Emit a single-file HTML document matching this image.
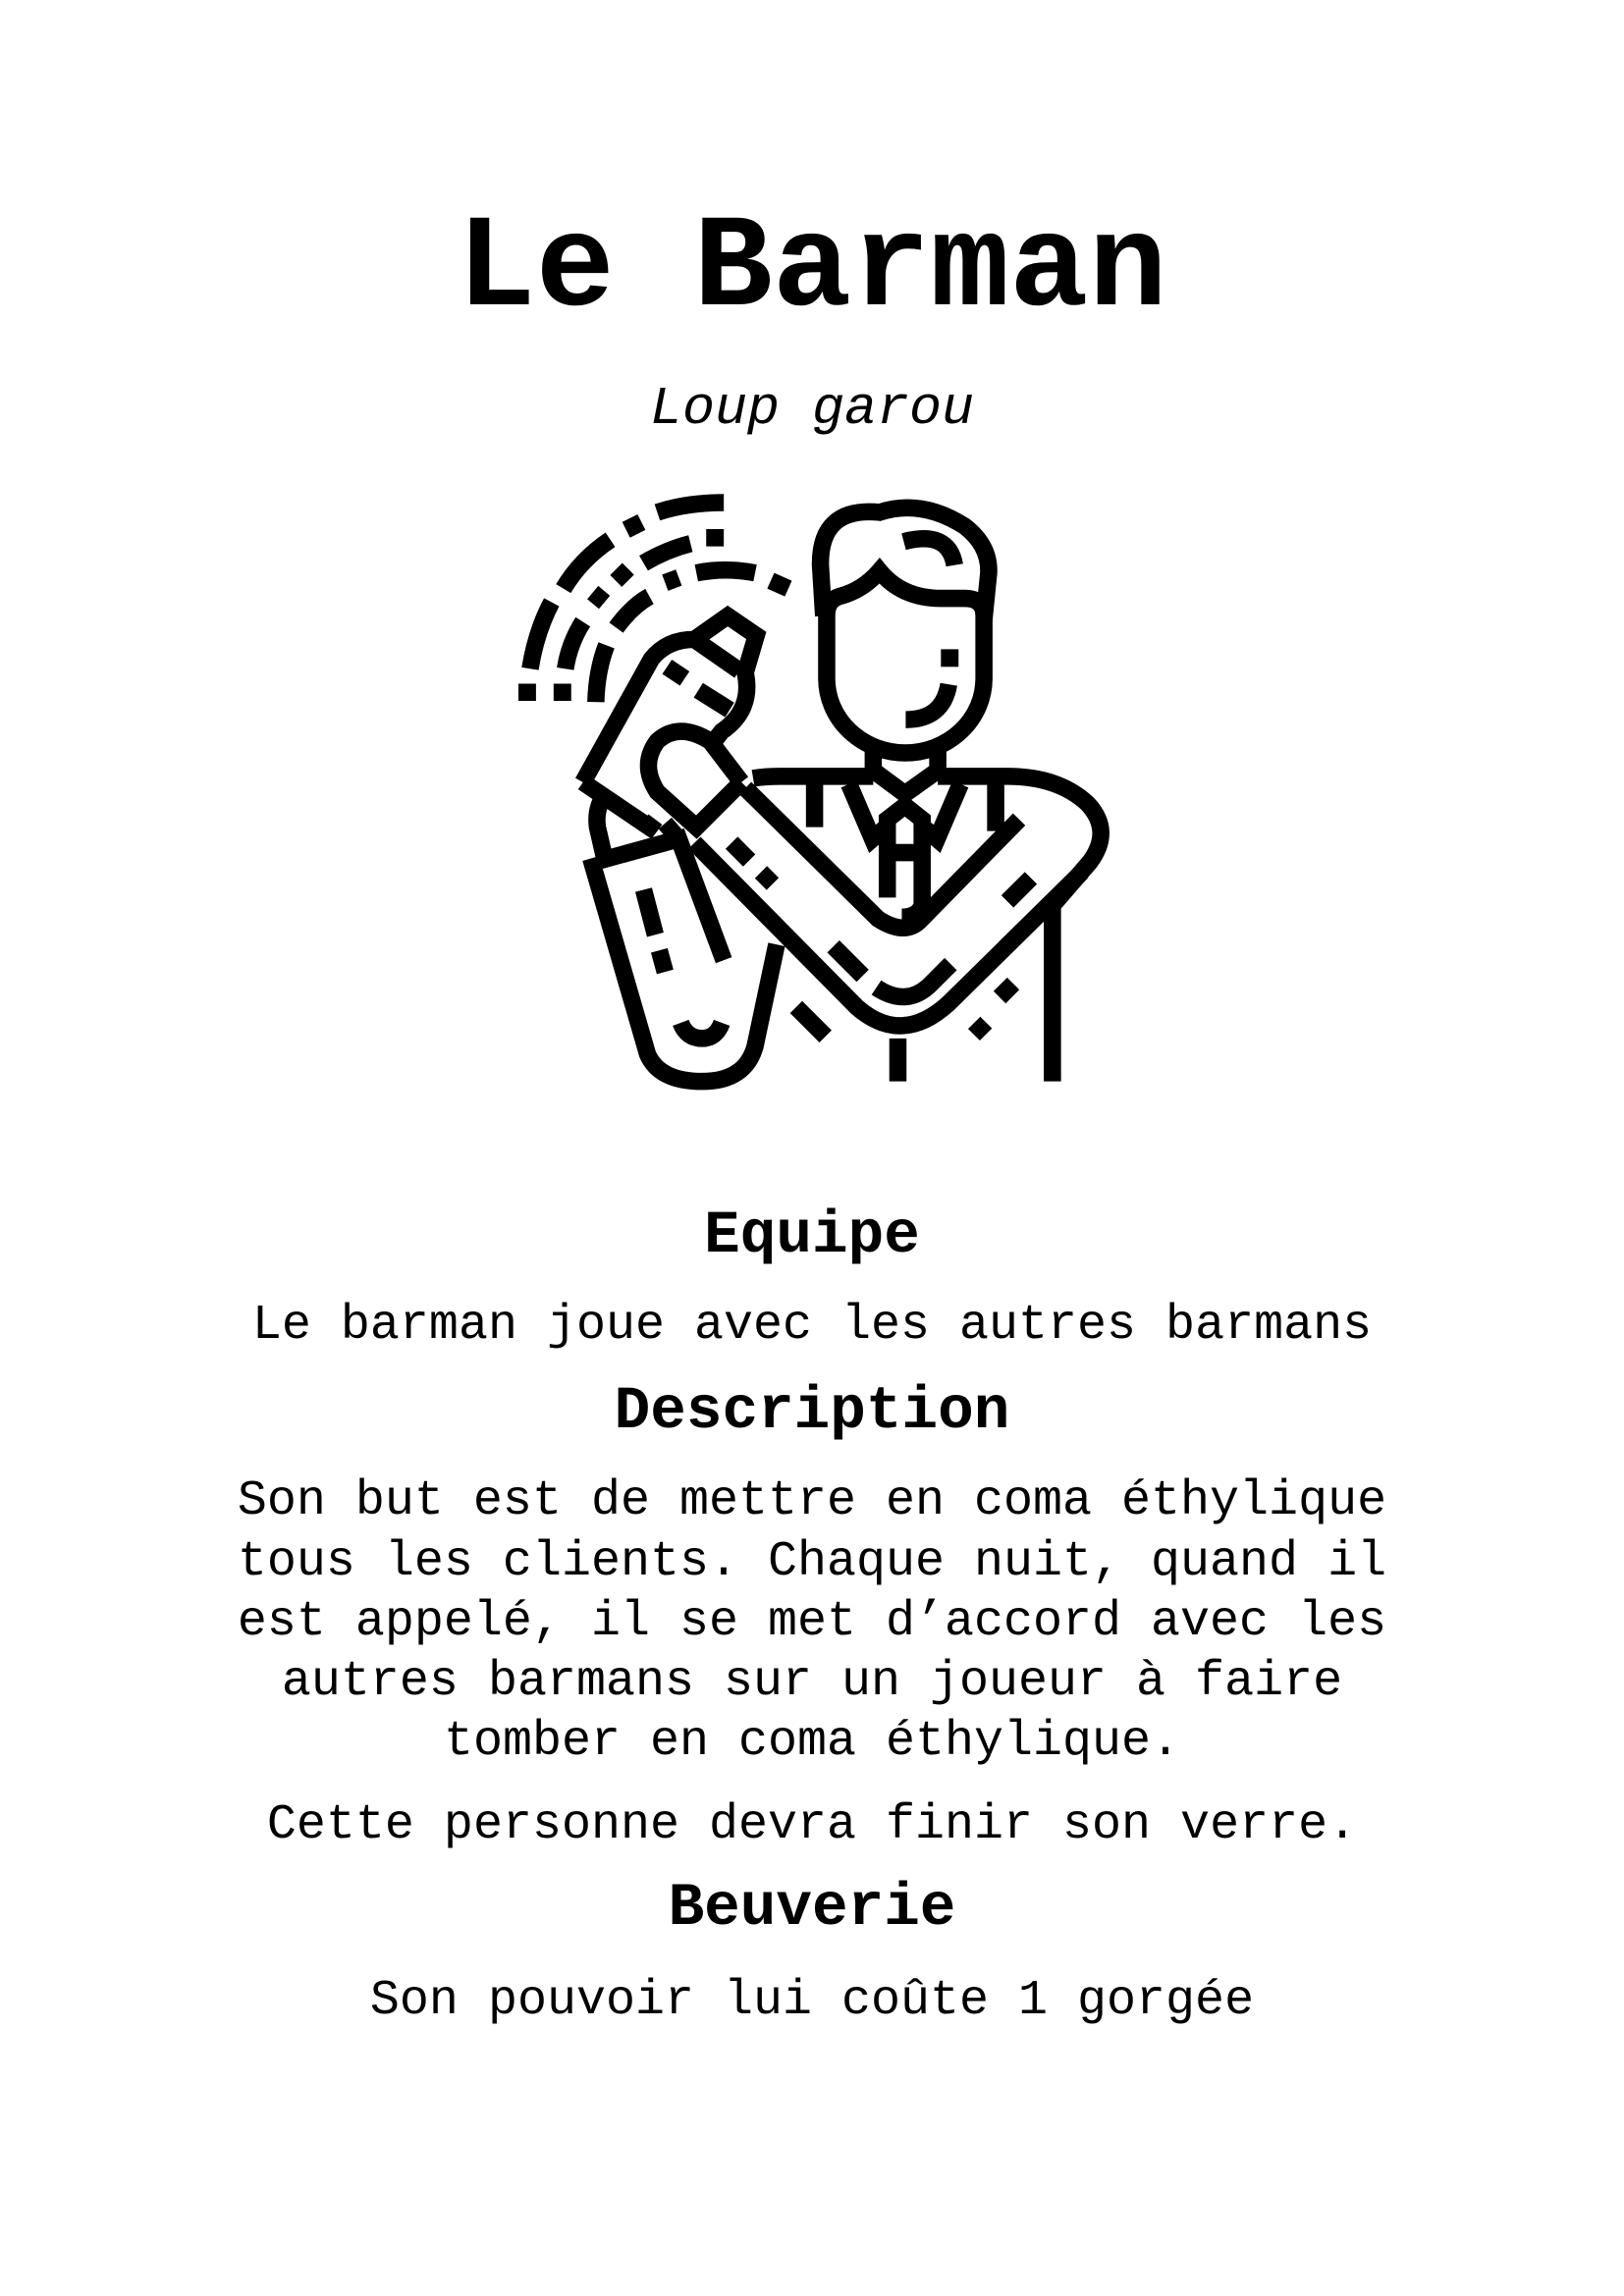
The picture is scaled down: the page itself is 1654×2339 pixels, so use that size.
<!DOCTYPE html>
<html><head><meta charset="utf-8"><style>
html,body{margin:0;padding:0;background:#fff;}
body{width:1654px;height:2339px;position:relative;overflow:hidden;font-family:"Liberation Mono",monospace;color:#000;}
.l{position:absolute;left:0;width:1654px;text-align:center;white-space:pre;}
.t{font-size:134px;line-height:134px;font-weight:bold;}
.s{font-size:55px;line-height:55px;font-style:italic;}
.h{font-size:61px;line-height:61px;font-weight:bold;}
.b{font-size:50px;line-height:50px;}
</style></head><body>
<div class="l t" style="top:208px">Le Barman</div>
<div class="l s" style="top:389px">Loup garou</div>
<svg style="position:absolute;left:520px;top:500px" width="620" height="620" viewBox="0 0 1556 1556" fill="none" stroke="#000" stroke-width="44" stroke-linejoin="miter">
<path d="M808,320 V480 A201,190 0 0 0 1210,480 V320 Q1210,275 1160,275 H1100 Q1000,275 943,205 Q900,255 840,270 Q808,280 808,320"/>
<path d="M800,320 L792,190 Q790,40 943,55 Q1050,20 1160,90 Q1225,140 1222,210 L1210,330"/>
<path d="M1005,130 Q1120,100 1135,190"/>
<rect x="1100" y="405" width="45" height="45" fill="#000" stroke="none"/>
<path d="M1010,585 Q1105,585 1120,495"/>
<path d="M927,650 V730 M1092,650 V730 M927,715 L1008,775 L1092,715"/>
<path d="M620,735 Q650,730 690,730 H927 M1092,730 H1270 Q1400,730 1475,800 Q1540,870 1480,950 L1385,1060 V1510"/>
<path d="M600,760 L940,1095 Q1010,1140 1050,1095 L1300,840"/>
<path d="M470,900 L885,1320 Q1000,1420 1120,1310 L1460,975"/>
<path d="M777,750 V860 M1240,750 V870 M865,750 L925,890 L960,860 M1150,750 L1090,890 L1055,860"/>
<path d="M963,1040 V840 L1008,805 L1052,840 V1060 Q1040,1090 1000,1090 M985,925 H1030"/>
<path d="M590,745 L475,860 L375,770 Q330,700 375,640 Q430,590 510,640 L590,745"/>
<path d="M185,745 L360,430 Q400,380 470,380 L555,320 L628,370 L600,465 Q620,560 540,615 L520,640 M185,745 L355,860 L370,840 M470,380 L585,460"/>
<path d="M400,450 L445,480 M480,510 L560,560"/>
<path d="M205,940 L350,1440 Q380,1510 490,1510 Q600,1510 625,1420 L680,1160 M230,945 L430,890 L545,1200 M245,960 L222,860 Q215,810 245,770 M395,850 L430,890"/>
<path d="M340,1020 L370,1135 M380,1175 L395,1230 M435,1360 Q450,1400 490,1400 Q525,1400 540,1360"/>
<path d="M565,900 L610,945 M640,975 L670,1005 M825,1165 L900,1240 M935,1270 Q1010,1320 1070,1265 L1125,1210 M730,1320 L805,1395 M1185,1360 L1215,1390 M1250,1295 L1285,1260 M1270,1050 L1330,990"/>
<path d="M990,1400 V1510"/>
<path d="M545,30 Q450,30 375,55 M305,70 L325,110 M255,125 Q180,175 135,250 M105,285 Q65,360 50,455 M20,515 H65 M110,515 H155 M340,185 Q400,150 460,135 M500,120 H545 M270,200 L300,230 M210,260 L240,285 M185,335 Q150,390 140,455 M270,350 Q310,295 355,270 M395,235 L430,222 M475,210 Q550,195 625,210 M665,230 L710,250 M245,395 Q220,460 218,540"/>
</svg>
<div class="l h" style="top:1229px">Equipe</div>
<div class="l b" style="top:1326px">Le barman joue avec les autres barmans</div>
<div class="l h" style="top:1408px">Description</div>
<div class="l b" style="top:1505px">Son but est de mettre en coma éthylique</div>
<div class="l b" style="top:1567px">tous les clients. Chaque nuit, quand il</div>
<div class="l b" style="top:1628px">est appelé, il se met d’accord avec les</div>
<div class="l b" style="top:1689px">autres barmans sur un joueur à faire</div>
<div class="l b" style="top:1750px">tomber en coma éthylique.</div>
<div class="l b" style="top:1835px">Cette personne devra finir son verre.</div>
<div class="l h" style="top:1914px">Beuverie</div>
<div class="l b" style="top:2014px">Son pouvoir lui coûte 1 gorgée</div>
</body></html>
